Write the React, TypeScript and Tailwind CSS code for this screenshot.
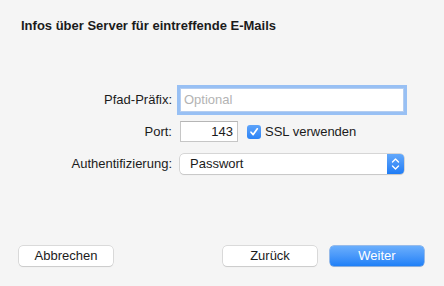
import React from "react";

export default function App() {
  return (
    <div
      className="w-[444px] h-[286px] bg-[#f5f5f5] flex flex-col text-[#1b1b1b] overflow-hidden"
      style={{ fontFamily: '"Liberation Sans", Arial, sans-serif' }}
    >
      <div className="pt-[18px] pl-[21px] text-[13px] leading-[16px] font-bold">
        Infos über Server für eintreffende E-Mails
      </div>

      <div className="mt-[54px] grid grid-cols-[172px_auto] gap-x-[8px] text-[13px] leading-[16px]">
        <div className="flex items-center justify-end h-[24px]">Pfad-Präfix:</div>
        <div className="h-[24px] w-[224px] bg-white border border-[#b4cdf0] shadow-[0_0_0_3px_#98c0f4] flex items-center pl-[3px] text-[#b3b3b3]">
          Optional
        </div>

        <div className="mt-[9px] flex items-center justify-end h-[21px]">Port:</div>
        <div className="mt-[9px] flex items-center h-[21px]">
          <div className="w-[58px] h-[21px] bg-white border border-[#c6c6c6] border-t-[#b5b5b5] flex items-center justify-end pr-[4px]">
            143
          </div>
          <div className="ml-[9px] w-[14px] h-[14px] rounded-[3px] bg-gradient-to-b from-[#5ea4fa] to-[#2a83f6] flex items-center justify-center">
            <svg width="10" height="10" viewBox="0 0 10 10">
              <path d="M2 5.2 L4.2 7.6 L8.3 1.8" fill="none" stroke="white" strokeWidth="1.7" strokeLinecap="round" strokeLinejoin="round" />
            </svg>
          </div>
          <span className="ml-[4px]">SSL verwenden</span>
        </div>

        <div className="mt-[12px] flex items-center justify-end h-[20px]">Authentifizierung:</div>
        <div className="mt-[12px] h-[20px] w-[224px] bg-white rounded-[4px] shadow-[0_0_0_0.5px_#b8b8b8,0_1px_1px_rgba(0,0,0,0.12)] flex items-center overflow-hidden">
          <span className="pl-[10px] flex-1">Passwort</span>
          <div className="w-[17px] h-full bg-gradient-to-b from-[#62a8fb] to-[#1d7cf5] flex items-center justify-center">
            <svg width="9" height="14" viewBox="0 0 9 14">
              <path d="M1.5 5 L4.5 2 L7.5 5" fill="none" stroke="white" strokeWidth="1.4" strokeLinecap="round" strokeLinejoin="round" />
              <path d="M1.5 9 L4.5 12 L7.5 9" fill="none" stroke="white" strokeWidth="1.4" strokeLinecap="round" strokeLinejoin="round" />
            </svg>
          </div>
        </div>
      </div>

      <div className="mt-auto mb-[20px] flex px-[19px] pr-[20px] text-[13px] leading-[16px]">
        <button className="w-[94px] h-[20px] bg-white rounded-[4px] shadow-[0_0_0_0.5px_#c0c0c0,0_1px_1px_rgba(0,0,0,0.12)] flex items-center justify-center">
          Abbrechen
        </button>
        <button className="ml-auto w-[94px] h-[20px] bg-white rounded-[4px] shadow-[0_0_0_0.5px_#c0c0c0,0_1px_1px_rgba(0,0,0,0.12)] flex items-center justify-center">
          Zurück
        </button>
        <button className="ml-[13px] w-[94px] h-[20px] rounded-[4px] bg-gradient-to-b from-[#6aaefc] to-[#1e80f7] text-white shadow-[0_0_0_0.5px_#3a82e0,0_1px_1px_rgba(0,0,0,0.12)] flex items-center justify-center">
          Weiter
        </button>
      </div>
    </div>
  );
}
